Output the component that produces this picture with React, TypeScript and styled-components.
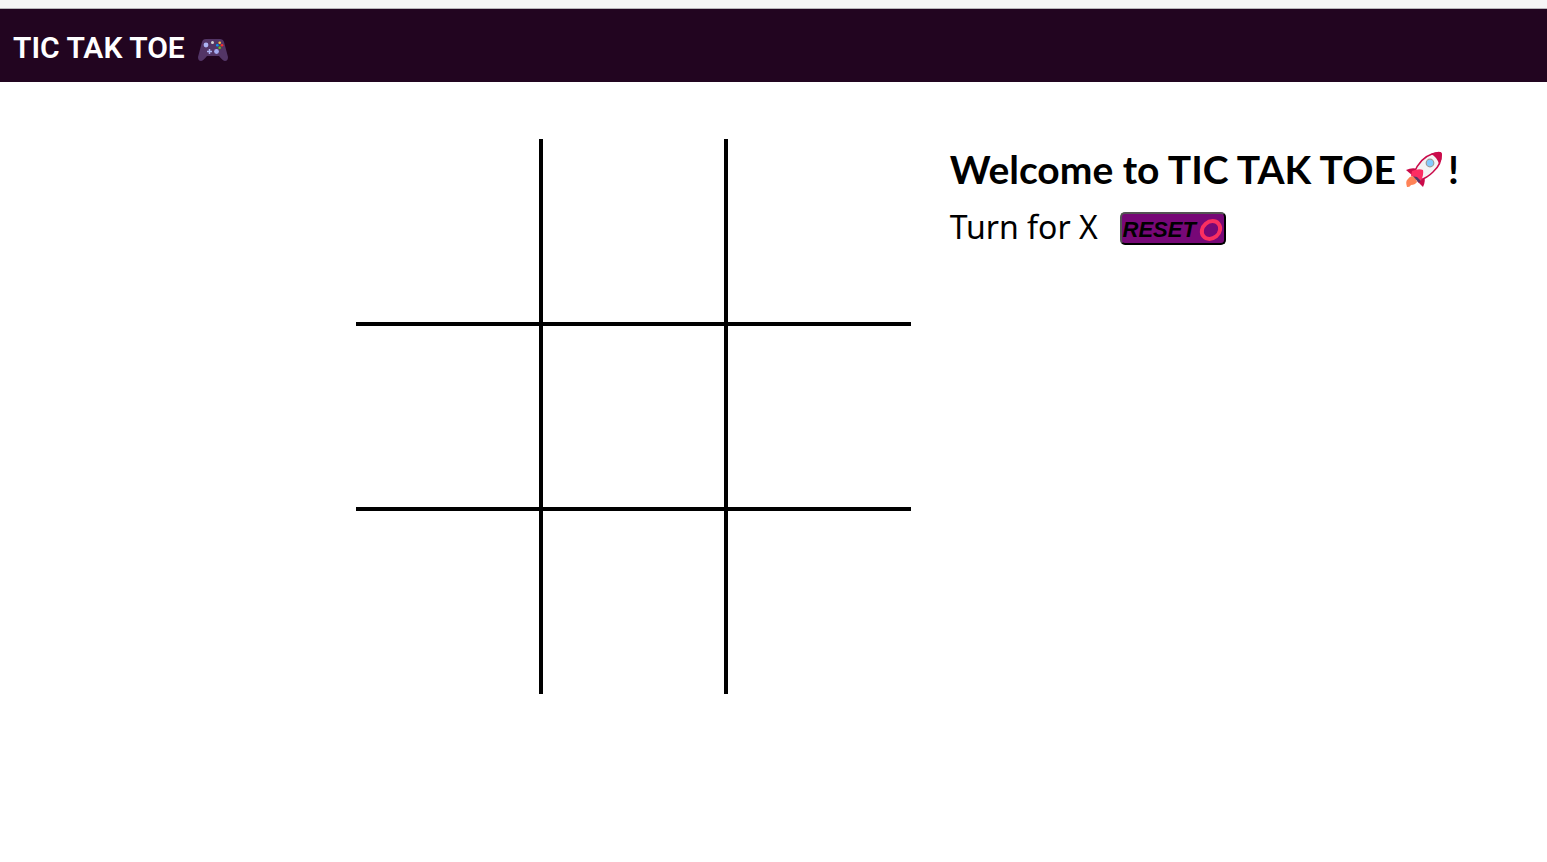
import React, { useState } from "react";
import styled, { createGlobalStyle } from "styled-components";

const GlobalStyle = createGlobalStyle`
  * { box-sizing: border-box; }
  body { margin: 0; background: #fff; color: #000; font-family: Lato, sans-serif; }
`;

const TopStrip = styled.div`
  height: 9px;
  background: #f6f6f6;
  border-bottom: 1px solid #b8b5ba;
`;

const Nav = styled.nav`
  display: flex;
  align-items: center;
  gap: 12px;
  height: 73px;
  padding: 4px 13px 0;
  background: #220520;
  color: #fff;
  font: 600 30px/40px Roboto, sans-serif;
`;

const NavIcon = styled.svg`
  width: 32px;
  height: 32px;
  margin-top: 6px;
`;

const Main = styled.main`
  display: flex;
  align-items: flex-start;
  gap: 39px;
  padding: 57px 24px 48px 23vw;
`;

const Board = styled.div`
  display: grid;
  grid-template-columns: repeat(3, 1fr);
  flex: 0 1 555px;
  min-width: 300px;
`;

const Cell = styled.button<{ $index: number }>`
  aspect-ratio: 1;
  min-width: 0;
  padding: 0;
  background: transparent;
  border: 0 solid #000;
  border-right-width: ${({ $index }) => ($index % 3 < 2 ? 2 : 0)}px;
  border-left-width: ${({ $index }) => ($index % 3 > 0 ? 2 : 0)}px;
  border-bottom-width: ${({ $index }) => ($index < 6 ? 2 : 0)}px;
  border-top-width: ${({ $index }) => ($index > 2 ? 2 : 0)}px;
  color: #000;
  font: 96px/1 Lato, sans-serif;
`;

const Info = styled.section`
  flex: none;
  padding-top: 6px;
`;

const Heading = styled.h1`
  display: flex;
  align-items: center;
  margin: 0;
  font: 700 39px/48px Lato, sans-serif;
  white-space: pre;
`;

const Rocket = styled.svg`
  width: 40px;
  height: 40px;
  margin: 2px 4px 0 8px;
`;

const Status = styled.div`
  display: flex;
  align-items: center;
  gap: 22px;
  margin-top: 19px;
  font: 400 32px/33px "Noto Sans", sans-serif;
`;

const StatusText = styled.span`
  margin-top: -4px;
`;

const ResetButton = styled.button`
  display: flex;
  align-items: center;
  justify-content: center;
  gap: 3px;
  width: 106px;
  height: 33px;
  padding: 2px 0 0;
  background: #770877;
  border: 2px outset #000;
  border-radius: 5px;
  color: #000;
  font: italic 700 22px/28px "Liberation Sans", Arial, sans-serif;
`;

const Ring = styled.svg`
  width: 24px;
  height: 24px;
`;

const Gamepad = () => (
  <NavIcon viewBox="0 0 32 32" aria-hidden="true">
    <path d="M7 5Q8 3 11 4L12 5H20L22 4Q25 3 26 6Z" fill="#170417" />
    <path d="M6 5Q7 4 9 4H23Q26 4 27 7L31 22Q31 26 28 26Q26 26 22 21H10Q6 26 4 26Q1 26 1 22L5 7Z" fill="#533566" />
    <circle cx="9" cy="10" r="2.4" fill="#aeb4f4" />
    <circle cx="19.5" cy="16.5" r="2.4" fill="#a5aaf0" />
    <circle cx="15.5" cy="7.5" r="1.5" fill="#d3d3d3" />
    <path d="M12.5 14V19M10 16.5H15" stroke="#aeb4f4" strokeWidth="1.5" />
    <circle cx="22.7" cy="7.7" r="1.3" fill="#f9c23c" />
    <circle cx="25" cy="10.2" r="1.3" fill="#f8312f" />
    <circle cx="20.3" cy="10.2" r="1.3" fill="#0098f0" />
    <circle cx="22.7" cy="12.7" r="1.3" fill="#62c01b" />
  </NavIcon>
);

const RocketIcon = () => (
  <Rocket viewBox="0 0 40 40" role="img" aria-label="rocket">
    <path d="M8 26Q12 27 13 32Q11 35 7 35Q6 37 4 37H3Q1 31 4 29Q5 27 8 26Z" fill="#ff8357" />
    <path d="M2 20Q8 17 14 19L9 26Z" fill="#ca0b4a" />
    <path d="M20 25Q22 31 19 37L13 31Z" fill="#ca0b4a" />
    <path d="M10 23Q16 8 28 4Q37 1 37 4Q38 14 29 22Q23 28 16 30Z" fill="#f4f4f4" stroke="#ca0b4a" strokeWidth="1.5" />
    <path d="M27 4Q31 2 35 2Q38 2 38 5Q38 10 35 14Q33 7 27 4Z" fill="#ca0b4a" />
    <path d="M8 25L10 23L18 29L15 33Z" fill="#533566" />
    <path d="M8 21Q15 18 19 20Q20 24 17 31L13 27L7 26Z" fill="#fc2d62" />
    <circle cx="26" cy="13" r="3.8" fill="#83cbff" stroke="#9b9b9b" strokeWidth="1.2" />
  </Rocket>
);

export default function App() {
  const [cells, setCells] = useState<string[]>(Array(9).fill(""));
  const turn = cells.filter(Boolean).length % 2 === 0 ? "X" : "0";
  const play = (i: number) => {
    if (!cells[i]) setCells(cells.map((c, n) => (n === i ? turn : c)));
  };

  return (
    <>
      <GlobalStyle />
      <TopStrip />
      <Nav>
        <span>TIC TAK TOE</span>
        <Gamepad />
      </Nav>
      <Main>
        <Board>
          {cells.map((mark, i) => (
            <Cell key={i} $index={i} onClick={() => play(i)} aria-label={`Square ${i + 1}`}>
              {mark}
            </Cell>
          ))}
        </Board>
        <Info>
          <Heading>
            <span>Welcome to TIC TAK TOE</span>
            <RocketIcon />
            <span>!</span>
          </Heading>
          <Status>
            <StatusText>Turn for {turn}</StatusText>
            <ResetButton onClick={() => setCells(Array(9).fill(""))}>
              RESET
              <Ring viewBox="0 0 24 24" aria-hidden="true">
                <ellipse cx="12" cy="12" rx="9.8" ry="8.2" transform="rotate(-40 12 12)" fill="none" stroke="#f92f60" strokeWidth="4" />
              </Ring>
            </ResetButton>
          </Status>
        </Info>
      </Main>
    </>
  );
}
